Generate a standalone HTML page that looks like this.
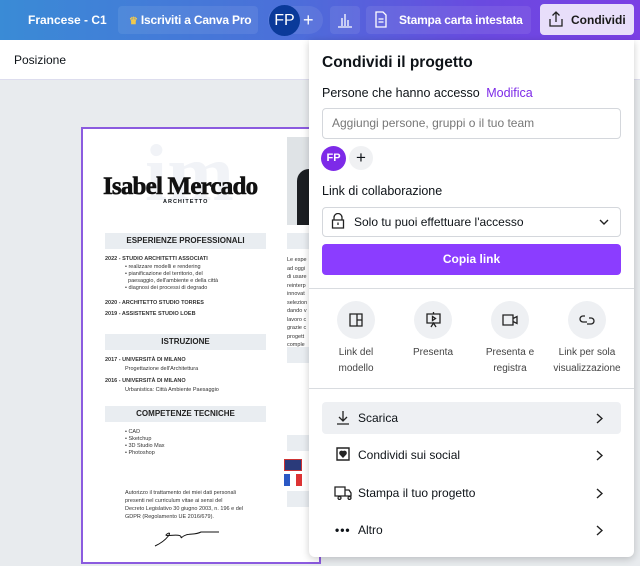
<!DOCTYPE html>
<html><head><meta charset="utf-8"><style>
*{margin:0;padding:0;box-sizing:border-box}
body{width:640px;height:566px;overflow:hidden;background:#e8ebee;font-family:"Liberation Sans",sans-serif;position:relative;color:#0e1318}
.top{position:absolute;left:0;top:0;width:640px;height:40px;background:linear-gradient(90deg,#3a8bd6 0%,#4b6fd9 45%,#6a4ae0 75%,#7b3fe4 100%)}
.tb{position:absolute;color:#fff;font-size:12px;font-weight:bold;top:0;height:40px;line-height:40px}
.btn{position:absolute;top:6px;height:28px;border-radius:4px;background:rgba(255,255,255,.08)}
.pos{position:absolute;left:0;top:40px;width:640px;height:40px;background:#fff;border-bottom:1px solid #dde}
.page{position:absolute;left:81px;top:127px;width:240px;height:437px;background:#fff;border:2px solid #8b5bdf;overflow:hidden}
.page *{position:absolute}
.bar{background:#e9edf1;height:16px;font-size:8px;font-weight:bold;text-align:center;line-height:16px;color:#222}
.sm{font-size:5.5px;color:#333;white-space:nowrap;line-height:7px}
.panel{position:absolute;left:309px;top:40px;width:325px;height:517px;background:#fff;box-shadow:0 2px 8px rgba(0,0,0,.2);border-radius:0 0 6px 6px}
.panel>*{position:absolute}
.lbl{font-size:12.5px;color:#0e1318}
.circ{width:38px;height:38px;border-radius:50%;background:#eef0f3;top:261px}
.cap{font-size:10px;color:#444;text-align:center;line-height:16px;top:305px;width:80px}
.row{left:13px;width:299px;height:32px;border-radius:4px;font-size:12px;line-height:32px;padding-left:36px}
.chev{position:absolute;right:18px;top:11px}
</style></head><body>
<div class="top"></div>
<div class="tb" style="left:28px">Francese - C1</div>
<div class="btn" style="left:118px;width:140px"></div>
<div class="tb" style="left:129px;letter-spacing:-0.2px"><span style="color:#f2c94c;font-size:10px">♛</span> Iscriviti a Canva Pro</div>
<div class="btn" style="left:268px;width:55px;border-radius:16px"></div>
<div style="position:absolute;left:269px;top:5px;width:31px;height:31px;border-radius:50%;background:#0a3a9a;color:#fff;font-size:16px;line-height:31px;text-align:center">FP</div>
<div class="tb" style="left:303px;font-size:18px;font-weight:normal">+</div>
<div class="btn" style="left:330px;width:30px"></div>
<svg style="position:absolute;left:337px;top:12px" width="16" height="16" fill="none" stroke="#fff" stroke-width="1.3"><path d="M1 15H15M5 14V6M8 14V2M11 14V8"/></svg>
<div class="btn" style="left:366px;width:165px"></div>
<svg style="position:absolute;left:375px;top:11px" width="12" height="17" fill="none" stroke="#fff" stroke-width="1.3"><path d="M1 1H8L11 4V16H1Z M3.5 8H8.5M3.5 11H8.5"/></svg>
<div class="tb" style="left:399px;letter-spacing:-0.2px">Stampa carta intestata</div>
<div style="position:absolute;left:540px;top:4px;width:94px;height:31px;border-radius:4px;background:#e8defa"></div>
<svg style="position:absolute;left:548px;top:11px" width="16" height="16" fill="none" stroke="#222" stroke-width="1.3"><path d="M8 11V1M4.5 4.5L8 1L11.5 4.5M2 8V15H14V8"/></svg>
<div class="tb" style="left:571px;color:#1a1a1a">Condividi</div>
<div class="pos"><span style="position:absolute;left:14px;top:13px;font-size:12px">Posizione</span></div>

<div class="page">
<div style="left:62px;top:0px;font-size:80px;font-family:'Liberation Serif',serif;font-weight:bold;color:#f1f3f7">im</div>
<div style="left:20px;top:44px;font-size:25px;font-family:'Liberation Serif',serif;font-weight:bold;letter-spacing:-0.8px;color:#111;-webkit-text-stroke:0.6px #111">Isabel Mercado</div>
<div style="left:80px;top:70px;font-size:5.5px;font-weight:bold;letter-spacing:1px">ARCHITETTO</div>
<div class="bar" style="left:22px;top:104px;width:161px">ESPERIENZE PROFESSIONALI</div>
<div class="sm" style="left:22px;top:127px;font-weight:bold">2022 - STUDIO ARCHITETTI ASSOCIATI</div>
<div class="sm" style="left:42px;top:135px">• realizzare modelli e rendering<br>• pianificazione del territorio, del<br>&nbsp; paesaggio, dell'ambiente e della città<br>• diagnosi dei processi di degrado</div>
<div class="sm" style="left:22px;top:171px;font-weight:bold">2020 - ARCHITETTO STUDIO TORRES</div>
<div class="sm" style="left:22px;top:182px;font-weight:bold">2019 -  ASSISTENTE STUDIO LOEB</div>
<div class="bar" style="left:22px;top:205px;width:161px">ISTRUZIONE</div>
<div class="sm" style="left:22px;top:228px;font-weight:bold">2017 - UNIVERSITÀ DI MILANO</div>
<div class="sm" style="left:42px;top:237px">Progettazione dell'Architettura</div>
<div class="sm" style="left:22px;top:249px;font-weight:bold">2016 - UNIVERSITÀ DI MILANO</div>
<div class="sm" style="left:42px;top:258px">Urbanistica: Città Ambiente Paesaggio</div>
<div class="bar" style="left:22px;top:277px;width:161px">COMPETENZE TECNICHE</div>
<div class="sm" style="left:42px;top:300px">• CAD<br>• Sketchup<br>• 3D Studio Max<br>• Photoshop</div>
<div class="sm" style="left:42px;top:360px;line-height:8px">Autorizzo il trattamento dei miei dati personali<br>presenti nel curriculum vitae ai sensi del<br>Decreto Legislativo 30 giugno 2003, n. 196 e del<br>GDPR (Regolamento UE 2016/679).</div>
<svg style="left:70px;top:395px" width="70" height="25" fill="none" stroke="#111" stroke-width="1"><path d="M2 22C15 16 20 6 14 10C8 14 30 8 28 14C34 8 40 12 48 8L66 8"/></svg>
<div style="left:204px;top:8px;width:40px;height:88px;background:#dfe3e6"></div>
<div style="left:214px;top:40px;width:26px;height:56px;background:#1b1e22;border-radius:12px 0 0 0"></div>
<div style="left:204px;top:104px;width:40px;height:16px;background:#e9edf1"></div>
<div class="sm" style="left:204px;top:127px;line-height:8.5px">Le espe<br>ad oggi<br>di usare<br>reinterp<br>innovat<br>selezion<br>dando v<br>lavoro c<br>grazie c<br>progett<br>comple</div>
<div style="left:204px;top:218px;width:40px;height:16px;background:#e9edf1"></div>
<div style="left:204px;top:306px;width:40px;height:16px;background:#e9edf1"></div>
<div style="left:201px;top:330px;width:18px;height:12px;background:#2a3a7a;border:1px solid #c33"></div>
<div style="left:201px;top:345px;width:18px;height:12px;background:linear-gradient(90deg,#2b58c4 33%,#fff 33% 66%,#d33 66%)"></div>
<div style="left:204px;top:362px;width:40px;height:16px;background:#e9edf1"></div>
</div>

<div class="panel">
<div style="left:13px;top:14px;font-size:15.5px;font-weight:bold">Condividi il progetto</div>
<div class="lbl" style="left:13px;top:46px">Persone che hanno accesso <span style="color:#7d2ae8;margin-left:3px">Modifica</span></div>
<div style="left:13px;top:68px;width:299px;height:31px;border:1px solid #d4d7dc;border-radius:4px;font-size:12px;color:#777;line-height:29px;padding-left:9px">Aggiungi persone, gruppi o il tuo team</div>
<div style="left:12px;top:106px;width:25px;height:25px;border-radius:50%;background:#7d2ae8;color:#fff;font-size:11px;font-weight:bold;line-height:25px;text-align:center">FP</div>
<div style="left:40px;top:106px;width:24px;height:24px;border-radius:50%;background:#f0f1f3;font-size:17px;line-height:23px;text-align:center">+</div>
<div class="lbl" style="left:13px;top:144px">Link di collaborazione</div>
<div style="left:13px;top:167px;width:299px;height:30px;border:1px solid #d4d7dc;border-radius:4px;font-size:12px;line-height:28px;padding-left:31px">Solo tu puoi effettuare l'accesso</div>
<svg style="left:22px;top:173px" width="14" height="16" fill="none" stroke="#222" stroke-width="1.3"><path d="M3 7V4.5A4 4 0 0 1 11 4.5V7M1.5 7H12.5V15H1.5Z M7 9.5V12"/></svg>
<svg style="left:290px;top:179px" width="10" height="6" fill="none" stroke="#222" stroke-width="1.4"><path d="M1 1L5 5L9 1"/></svg>
<div style="left:13px;top:204px;width:299px;height:31px;border-radius:4px;background:#8b3dff;color:#fff;font-size:12px;font-weight:bold;text-align:center;line-height:31px">Copia link</div>
<div style="left:0;top:248px;width:325px;height:1px;background:#d9dce0"></div>
<div class="circ" style="left:28px"></div>
<svg style="left:40px;top:273px" width="14" height="14" fill="none" stroke="#222" stroke-width="1.3"><path d="M1 1H13V13H1Z M8 1V13M8 7H13"/></svg>
<div class="circ" style="left:105px"></div>
<svg style="left:117px;top:272px" width="15" height="16" fill="none" stroke="#222" stroke-width="1.3"><path d="M1 2H14V11H1Z M7.5 0V2M5 15L7.5 11L10 15M6.5 4.5V8.5L9.5 6.5Z"/></svg>
<div class="circ" style="left:182px"></div>
<svg style="left:193px;top:274px" width="16" height="12" fill="none" stroke="#222" stroke-width="1.3"><path d="M1 1H11V11H1Z M11 4.5L15 2.5V9.5L11 7.5"/></svg>
<div class="circ" style="left:259px"></div>
<svg style="left:270px;top:274px" width="16" height="12" fill="none" stroke="#222" stroke-width="1.3"><path d="M6 2H4A3 3 0 0 0 4 8H8M10 4H12A3 3 0 0 1 12 10H8"/></svg>
<div class="cap" style="left:7px">Link del<br>modello</div>
<div class="cap" style="left:84px">Presenta</div>
<div class="cap" style="left:161px">Presenta e<br>registra</div>
<div class="cap" style="left:238px">Link per sola<br>visualizzazione</div>
<div style="left:0;top:348px;width:325px;height:1px;background:#d9dce0"></div>
<div class="row" style="top:362px;background:#eef0f3">Scarica<svg class="chev" width="7" height="11" fill="none" stroke="#222" stroke-width="1.4"><path d="M1 1L6 5.5L1 10"/></svg></div>
<svg style="left:27px;top:370px" width="14" height="15" fill="none" stroke="#222" stroke-width="1.3"><path d="M7 1V11M3 7L7 11L11 7M1 14H13"/></svg>
<div class="row" style="top:399px">Condividi sui social<svg class="chev" width="7" height="11" fill="none" stroke="#222" stroke-width="1.4"><path d="M1 1L6 5.5L1 10"/></svg></div>
<svg style="left:27px;top:407px" width="14" height="14" fill="none" stroke="#222" stroke-width="1.4"><path d="M1 1H13V13H1Z"/><path d="M7 10L4.2 7A1.4 1.4 0 0 1 7 5A1.4 1.4 0 0 1 9.8 7Z" fill="#222"/></svg>
<div class="row" style="top:437px">Stampa il tuo progetto<svg class="chev" width="7" height="11" fill="none" stroke="#222" stroke-width="1.4"><path d="M1 1L6 5.5L1 10"/></svg></div>
<svg style="left:25px;top:445px" width="18" height="15" fill="none" stroke="#222" stroke-width="1.3"><path d="M1 2H11V11H1Z M11 5H15L17 8V11H11 M4 13A1.5 1.5 0 1 0 4 12.9M14 13A1.5 1.5 0 1 0 14 12.9"/></svg>
<div class="row" style="top:474px">Altro<svg class="chev" width="7" height="11" fill="none" stroke="#222" stroke-width="1.4"><path d="M1 1L6 5.5L1 10"/></svg></div>
<div style="left:26px;top:488px;font-size:12px;font-weight:bold;letter-spacing:1px;line-height:4px">•••</div>
</div>
</body></html>
